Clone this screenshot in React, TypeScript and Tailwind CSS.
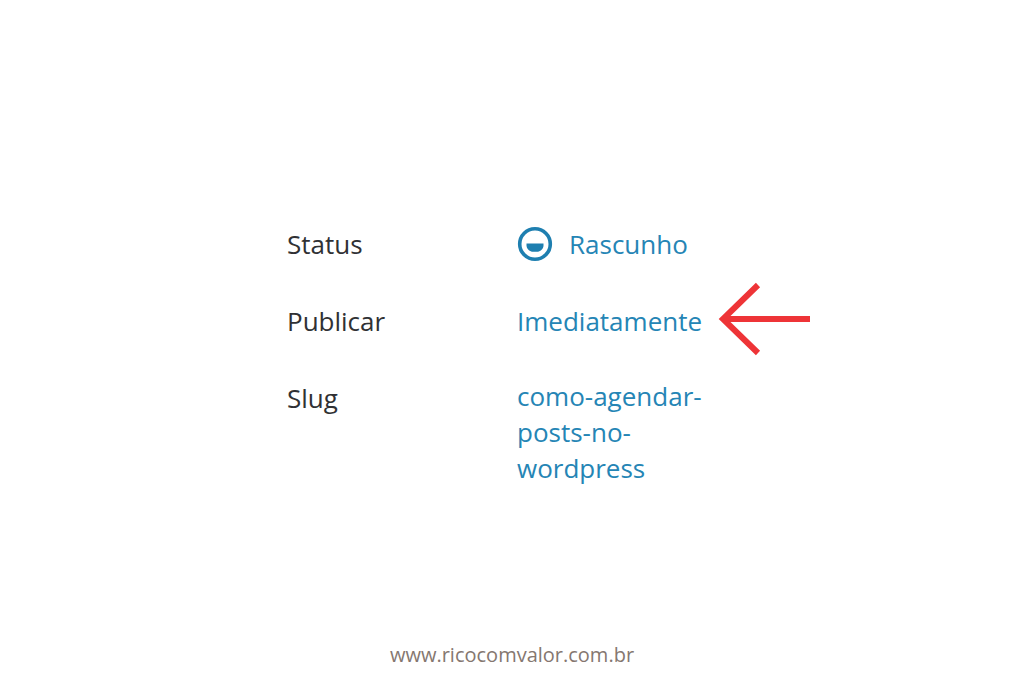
export default function App() {
  return (
    <div className="flex min-h-screen flex-col items-center justify-between bg-white pt-56 pb-3.5 font-['Open_Sans',sans-serif]">
      <main className="w-full max-w-[524px]">
        <dl className="grid grid-cols-[230px_1fr] gap-y-[37px] pl-[37px] text-[26px] leading-10 text-[#303134]">
          <dt>Status</dt>
          <dd>
            <button type="button" className="flex items-center gap-4 text-left text-[#2585b5]">
              <svg viewBox="0 0 36 36" className="size-9" aria-hidden="true">
                <circle cx="18" cy="18" r="15.3" fill="none" stroke="#1e7fb0" strokeWidth="3.6" />
                <path d="M9.5 17.5h17v2c0 3.5-3.5 6.300-6.500 6.300h-4c-3 0-6.500-2.800-6.500-6.300z" fill="#1e7fb0" />
              </svg>
              Rascunho
            </button>
          </dd>
          <dt>Publicar</dt>
          <dd className="flex items-center gap-4">
            <button type="button" className="text-left text-[#2585b5]">Imediatamente</button>
            <svg viewBox="0 0 92 74" className="-my-5 h-[74px] w-[92px] shrink-0 overflow-visible" fill="none" stroke="#ee3437" strokeWidth="6" aria-hidden="true">
              <path d="M92 35H5M40 1L5 35l35 34" />
            </svg>
          </dd>
          <dt>Slug</dt>
          <dd>
            <button type="button" className="w-[200px] text-left leading-9 text-[#2585b5]">como-agendar-posts-no-wordpress</button>
          </dd>
        </dl>
      </main>
      <footer>
        <a href="http://www.ricocomvalor.com.br" className="text-xl text-[#857770]">www.ricocomvalor.com.br</a>
      </footer>
    </div>
  )
}
